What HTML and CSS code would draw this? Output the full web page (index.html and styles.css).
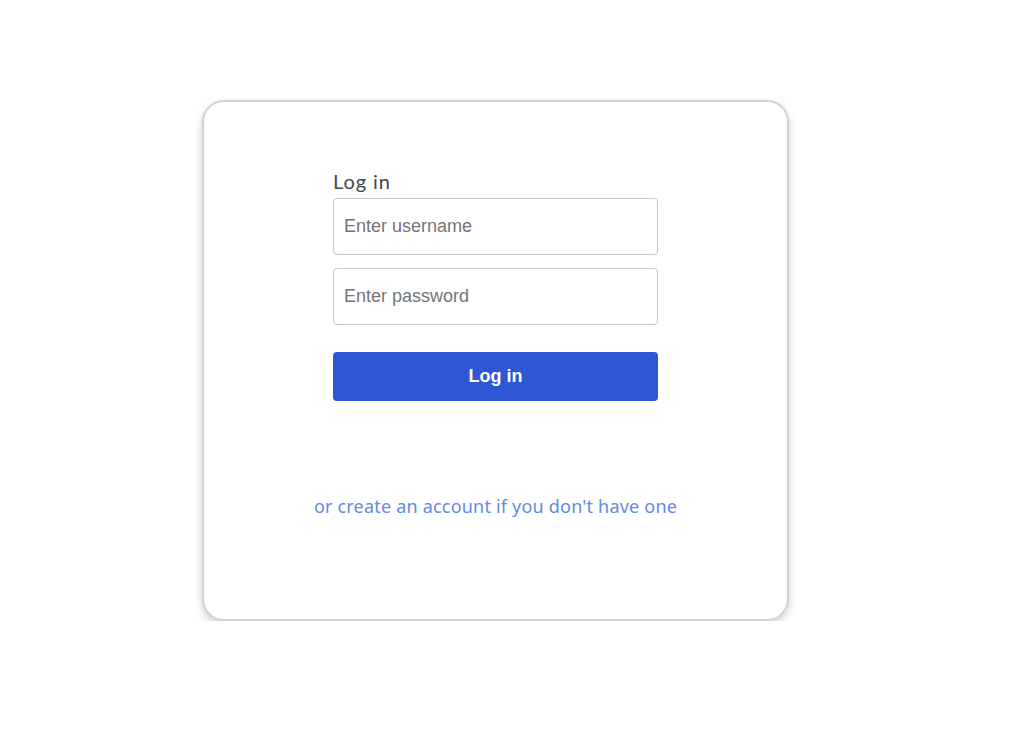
FILE: index.html
```html
<!DOCTYPE html>
<html>
<head>
<meta charset="utf-8">
<link rel="stylesheet" href="styles.css">
</head>
<body>
<div class="page">
  <div class="card">
    <form class="form">
      <label class="title">Log in</label>
      <input class="field" type="text" placeholder="Enter username">
      <input class="field" type="password" placeholder="Enter password">
      <button class="btn" type="button">Log in</button>
    </form>
    <a class="link" href="#">or create an account if you don't have one</a>
  </div>
</div>
</body>
</html>
```
FILE: styles.css
```css
html, body { margin: 0; padding: 0; background: #fff; }
.page {
  display: flex;
  justify-content: flex-start;
  padding-top: 100px;
  padding-left: 202px;
}
.card {
  box-sizing: border-box;
  width: 587px;
  height: 521px;
  border: 2px solid #d2d2d4;
  border-radius: 22px;
  box-shadow: 0 4px 10px rgba(0,0,0,0.18);
  background: #fff;
  display: flex;
  flex-direction: column;
  align-items: center;
  padding-top: 64px;
}
.form {
  width: 325px;
  display: flex;
  flex-direction: column;
}
.title {
  font-family: "Lato", "Open Sans", sans-serif;
  font-size: 20px;
  letter-spacing: 0.9px;
  color: #454550;
  line-height: 30px;
  margin-bottom: 2px;
}
.field {
  box-sizing: border-box;
  height: 57px;
  border: 1px solid #c8c8c8;
  border-radius: 4px;
  padding: 0 10px;
  font-family: "Liberation Sans", Arial, sans-serif;
  font-size: 18px;
  color: #333;
  margin-bottom: 13px;
  outline: none;
}
.field::placeholder { color: #757575; }
.btn {
  margin-top: 14px;
  height: 49px;
  border: none;
  border-radius: 4px;
  background: #2f57d3;
  color: #fff;
  font-family: "Liberation Sans", Arial, sans-serif;
  font-weight: bold;
  font-size: 18px;
}
.link {
  margin-top: 93px;
  font-family: "Noto Sans", "Liberation Sans", sans-serif;
  font-size: 18px;
  color: #6489e6;
  text-decoration: none;
  letter-spacing: 0.2px;
}
```
